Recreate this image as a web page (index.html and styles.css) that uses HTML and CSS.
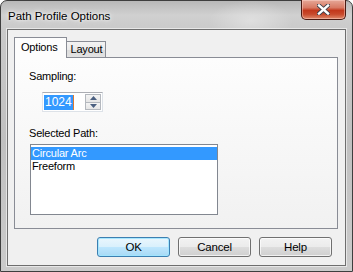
FILE: index.html
```html
<!DOCTYPE html>
<html>
<head>
<meta charset="utf-8">
<link rel="stylesheet" href="styles.css">
</head>
<body>
<div class="window">
  <div class="titlebar">
    <div class="title">Path Profile Options</div>
    <div class="close">
      <svg width="13" height="11" viewBox="0 0 13 11">
        <path d="M2 1.5 L11 9.5 M11 1.5 L2 9.5" stroke="#3a3f4a" stroke-width="4.2" stroke-linecap="square"/>
        <path d="M2 1.5 L11 9.5 M11 1.5 L2 9.5" stroke="#ffffff" stroke-width="2.4" stroke-linecap="square"/>
      </svg>
    </div>
  </div>
  <div class="client">
    <div class="tabstrip">
      <div class="tab selected">Options</div>
      <div class="tab">Layout</div>
    </div>
    <div class="panel">
      <div class="label first">Sampling:</div>
      <div class="spin">
        <div class="spin-text"><span class="sel">1024</span></div>
        <div class="spin-btns">
          <div class="sbtn up"><svg width="7" height="4" viewBox="0 0 7 4"><path d="M0 4 L3.5 0 L7 4 Z" fill="#4a5f80"/></svg></div>
          <div class="sbtn down"><svg width="7" height="4" viewBox="0 0 7 4"><path d="M0 0 L3.5 4 L7 0 Z" fill="#4a5f80"/></svg></div>
        </div>
      </div>
      <div class="label second">Selected Path:</div>
      <div class="list">
        <div class="item active">Circular Arc</div>
        <div class="item">Freeform</div>
      </div>
    </div>
    <div class="buttons">
      <div class="btn default">OK</div>
      <div class="btn">Cancel</div>
      <div class="btn">Help</div>
    </div>
  </div>
</div>
</body>
</html>
```

FILE: styles.css
```css
html, body {
  margin: 0;
  padding: 0;
  width: 353px;
  height: 272px;
  overflow: hidden;
  background: #ffffff;
}
.window {
  width: 353px;
  height: 272px;
  box-sizing: border-box;
  border: 1px solid #3e3e3e;
  border-radius: 7px 7px 0 0;
  background:
    radial-gradient(ellipse 60px 30px at 250px 20px, rgba(255,255,255,0.35), rgba(255,255,255,0) 70%),
    linear-gradient(180deg, #b8b8b8 0px, #d0d0d0 14px, #c9c9c9 30px, #c0c0c0 140px, #cbcbcb 272px);
  display: flex;
  flex-direction: column;
  font-family: "Liberation Sans", Arial, sans-serif;
  font-size: 11px;
  letter-spacing: -0.2px;
  color: #000;
}
.titlebar {
  height: 28px;
  display: flex;
  align-items: flex-start;
  flex: none;
}
.title {
  padding: 7px 0 0 7px;
  font-size: 11.5px;
  letter-spacing: 0;
  line-height: 16px;
  color: #000;
  text-shadow: 0 0 6px rgba(255,255,255,0.9), 0 0 3px rgba(255,255,255,0.9);
}
.close {
  margin-left: auto;
  margin-right: 6px;
  margin-top: -1px;
  width: 45px;
  height: 20px;
  box-sizing: border-box;
  border: 1px solid #4a1a12;
  border-top: none;
  border-radius: 0 0 5px 5px;
  background: linear-gradient(180deg, #e6a898 0%, #d87a64 40%, #c2381c 55%, #c84a2c 75%, #e08a6c 100%);
  box-shadow: inset 0 0 0 1px rgba(255,220,210,0.45);
  display: flex;
  align-items: center;
  justify-content: center;
}
.client {
  flex: 1;
  margin: 0 6px 5px 6px;
  border: 1px solid #6e6e6e;
  box-shadow: 0 0 0 1px rgba(255,255,255,0.55);
  background: #f0f0f0;
  padding: 7px 7px 0 6px;
  display: flex;
  flex-direction: column;
}
.tabstrip {
  height: 20px;
  display: flex;
  align-items: flex-end;
  position: relative;
  z-index: 1;
}
.tab {
  box-sizing: border-box;
  border: 1px solid #898c95;
  border-bottom: none;
  height: 16px;
  padding: 1px 3px 0 4px;
  line-height: 13px;
  background: linear-gradient(180deg, #f3f3f3 0%, #ebebeb 50%, #dcdcdc 51%, #e2e2e2 100%);
  margin-left: -1px;
}
.tab.selected {
  height: 21px;
  margin-bottom: -1px;
  margin-left: 0;
  padding: 3px 8px 0 6px;
  background: #fdfdfd;
  position: relative;
  z-index: 2;
}
.panel {
  width: 324px;
  height: 172px;
  box-sizing: border-box;
  border: 1px solid #898c95;
  background: linear-gradient(180deg, #fdfdfd 0%, #f6f6f6 60%, #f1f1f1 100%);
  padding: 0 0 0 14px;
}
.label {
  line-height: 13px;
}
.label.first {
  margin-top: 12px;
}
.spin {
  margin: 9px 0 0 13px;
  width: 61px;
  height: 20px;
  box-sizing: border-box;
  border: 1px solid #dde2e8;
  border-top-color: #abadb3;
  border-left-color: #e2e3ea;
  background: #fff;
  display: flex;
  align-items: center;
}
.spin-text {
  flex: 1;
  padding-left: 1px;
}
.sel {
  display: inline-block;
  background: #3399ff;
  color: #fff;
  font-size: 12px;
  letter-spacing: 0;
  line-height: 15px;
  padding: 0 1px 0 1px;
  border-right: 1px solid #e07a30;
}
.spin-btns {
  width: 16px;
  height: 16px;
  margin-right: 1px;
  display: flex;
  flex-direction: column;
}
.sbtn {
  flex: 1;
  box-sizing: border-box;
  border: 1px solid #b4b8be;
  background: linear-gradient(180deg, #f4f4f4 0%, #e6e6e6 100%);
  display: flex;
  align-items: center;
  justify-content: center;
}
.sbtn.down {
  border-top: none;
}
.label.second {
  margin-top: 15px;
}
.list {
  margin: 4px 0 0 1px;
  width: 188px;
  height: 71px;
  box-sizing: border-box;
  border: 1px solid #828790;
  background: #fff;
  padding-top: 2px;
}
.item {
  line-height: 13px;
  padding-left: 1px;
}
.item.active {
  background: #3399ff;
  color: #fff;
}
.buttons {
  display: flex;
  justify-content: flex-end;
  gap: 8px;
  margin-top: 8px;
  padding-right: 6px;
}
.btn {
  width: 73px;
  height: 20px;
  box-sizing: border-box;
  border: 1px solid #707070;
  border-radius: 3px;
  background: linear-gradient(180deg, #f2f2f2 0%, #ebebeb 50%, #dddddd 51%, #cfcfcf 100%);
  box-shadow: inset 0 0 0 1px rgba(255,255,255,0.7);
  text-align: center;
  line-height: 18px;
  font-size: 11.5px;
}
.btn.default {
  border-color: #3c7fb1;
  background: linear-gradient(180deg, #eaf6fd 0%, #d9f0fc 50%, #bee6fd 51%, #a7d9f5 100%);
  box-shadow: inset 0 0 0 1px rgba(160,230,255,0.9);
}
```
